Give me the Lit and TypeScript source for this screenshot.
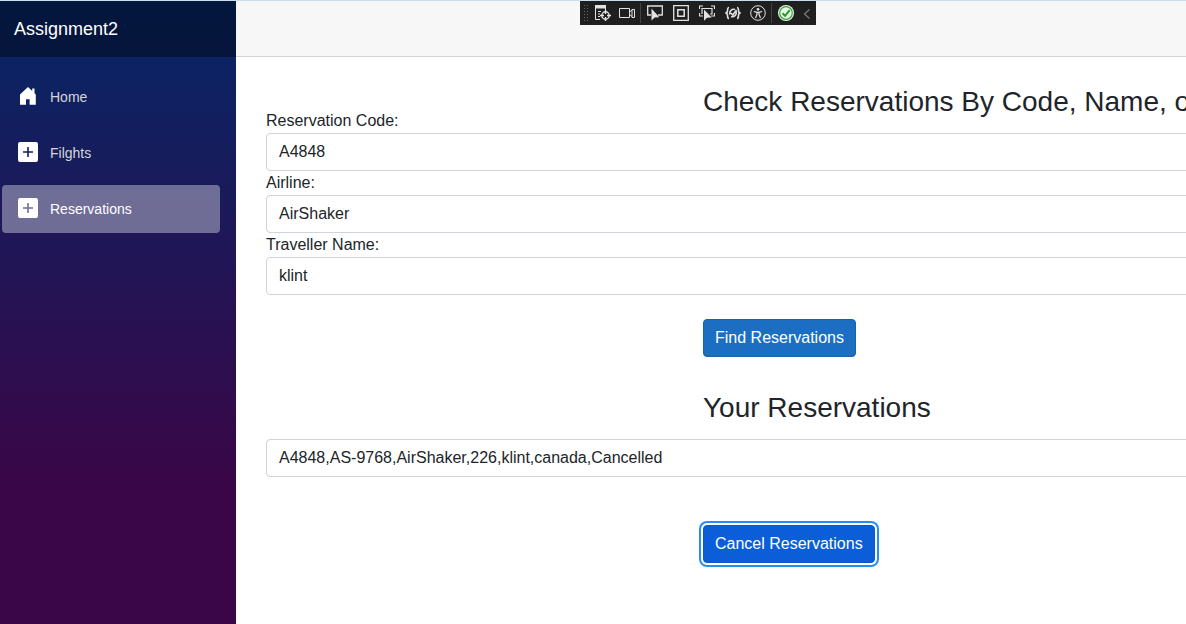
import { LitElement, html, css, svg } from "lit";
import { customElement, property } from "lit/decorators.js";

const houseIcon = svg`<svg class="icon" viewBox="0 0 20 20" aria-hidden="true"><path fill="#fff" d="M9.700 1.200 2 8.500v10.300h6v-5.500h3.600v5.500h6.200V8.500l-1.300-1.300V2.500h-2.300v2.600L10.300 1.200z"/></svg>`;
const plusIcon = svg`<svg class="icon" viewBox="0 0 20 20" aria-hidden="true"><path fill="#fff" fill-rule="evenodd" d="M2 0h16a2 2 0 0 1 2 2v16a2 2 0 0 1-2 2H2a2 2 0 0 1-2-2V2a2 2 0 0 1 2-2zm7.200 5v4.200H5v1.600h4.200V15h1.600v-4.200H15V9.200h-4.200V5z"/></svg>`;

const glyphs = {
  tree: svg`<path fill="#e2e2e2" stroke="none" d="M0 0h11v3.500H0z"/><path d="M.5 3v11.500H5M10.500 3v2M3 6.500h3M3 9h2M3 11.500h2"/><circle cx="10.500" cy="10.500" r="3.700" stroke-width="1.400"/><path stroke-width="1.400" d="M10.500 5v4M10.500 12v4M5 10.500h4M12 10.500h4"/>`,
  camera: svg`<path d="M.5 3.500h10v9H.5zM10.500 7 13 5M10.500 9.500l2.500 2M13 4.500h2.500v8H13z"/>`,
  select: svg`<path stroke-width="1.300" d="M4 10H.700V1h14.600v9H11"/><path fill="#e2e2e2" stroke="none" d="M4.500 3.500v12l3.200-3 4.600-.3z"/>`,
  layout: svg`<path stroke-width="1.300" d="M.7.700h14.600v14.600H.7z"/><path stroke-width="1.500" d="M4.800 4.800h6.400v6.400H4.800z"/>`,
  track: svg`<path stroke-width="1.200" d="M.5 4V1H4M12 1h3.500v3M15.500 8v3H12M.5 8v3H4M3 9V3.500h10V9h-2"/><path fill="#e2e2e2" stroke="none" d="M5 4.500v11.300l3-3 4.600-.3z"/>`,
  reload: svg`<path stroke-width="1.600" d="M4 2.500C2 2.500 2.700 6 2.300 7L1 8l1.300 1c.4 1-.3 4.500 1.700 4.500M12 2.500c2 0 1.300 3.500 1.700 4.500L15 8l-1.300 1c-.4 1 .3 4.500-1.700 4.500M5 9.500c-1-3.500 2-6 5-5M11 6.500c1 3.500-2 6-5 5M5.800 8l2 2 3.700-5"/>`,
  person: svg`<circle cx="8" cy="8" r="7.300"/><circle cx="8" cy="4.300" r="1" fill="#e2e2e2"/><path stroke-width="1.200" d="M3.800 6.500 7 7.300v2L5.500 13M12.200 6.500 9 7.300v2l1.500 3.700M7 7.300h2"/>`,
  check: svg`<circle cx="8" cy="8" r="8" fill="#e9f5e6" stroke="none"/><circle cx="8" cy="8" r="6.300" stroke="#38a337" stroke-width="1.200"/><path stroke="#249b24" stroke-width="2" d="m4.500 8.200 2.600 2.600 4.600-5.600"/>`,
  chevron: svg`<path stroke="#777" stroke-width="1.300" d="m10.500 4.500-5 4.500 5 4.500"/>`,
};

@customElement("debug-toolbar")
export class DebugToolbar extends LitElement {
  static styles = css`
    :host { display: flex; align-items: center; height: 24px; padding: 0 1px 0 3px; background: #1f1f1f; box-sizing: border-box; }
    .grip { width: 6px; height: 18px; margin-right: 2px; background: radial-gradient(circle, #666 1px, transparent 1px) 0 0 / 3px 3px; }
    .tool { display: grid; place-items: center; width: 26px; height: 24px; padding: 0; border: 0; background: none; }
    .compact { width: 24px; }
    .narrow { width: 16px; }
    .divider { width: 1px; height: 20px; margin: 0 1px; background: #444; }
    svg { display: block; width: 16px; height: 16px; fill: none; stroke: #e2e2e2; }
  `;
  private tool(name: keyof typeof glyphs, label: string, size = "") {
    return html`<button type="button" class="tool ${size}" aria-label=${label}><svg viewBox="0 0 16 16">${glyphs[name]}</svg></button>`;
  }
  render() {
    return html`
      <span class="grip"></span>
      ${this.tool("tree", "Go to Live Visual Tree", "compact")}
      ${this.tool("camera", "Record", "compact")}
      <span class="divider"></span>
      ${this.tool("select", "Select Element")}
      ${this.tool("layout", "Display Layout Adorners")}
      ${this.tool("track", "Track Focused Element")}
      ${this.tool("reload", "Hot Reload Settings")}
      ${this.tool("person", "Scan for Accessibility Issues", "compact")}
      <span class="divider"></span>
      ${this.tool("check", "Hot Reload")}
      ${this.tool("chevron", "Collapse", "narrow")}
    `;
  }
}

@customElement("side-nav")
export class SideNav extends LitElement {
  @property() active = "Reservations";
  static styles = css`
    :host { display: block; background: linear-gradient(180deg, rgb(5, 39, 103) 0%, #3a0647 78%); }
    .brand { display: flex; align-items: center; height: 56px; padding-left: 14px; background: rgba(0, 0, 0, 0.4); box-sizing: border-box; }
    .brand a { color: #fff; font-size: 18px; text-decoration: none; }
    nav { display: flex; flex-direction: column; gap: 8px; padding: 16px 16px 0 2px; }
    .item { display: flex; align-items: center; gap: 12px; height: 48px; padding: 0 16px; border-radius: 4px; color: #d7d7d7; font-size: 14px; text-decoration: none; box-sizing: border-box; }
    .active { background: rgba(255, 255, 255, 0.37); color: #fff; }
    .icon { width: 20px; height: 20px; margin-bottom: 2px; }
  `;
  render() {
    const items = [["Home", houseIcon], ["Filghts", plusIcon], ["Reservations", plusIcon]] as const;
    return html`
      <div class="brand"><a href="#">Assignment2</a></div>
      <nav>
        ${items.map(([text, icon]) => html`<a href="#" class="item ${text === this.active ? "active" : ""}">${icon}<span>${text}</span></a>`)}
      </nav>
    `;
  }
}

@customElement("app-root")
export class AppRoot extends LitElement {
  static styles = css`
    :host { display: grid; grid-template-columns: 236px minmax(0, 1fr); position: relative; min-height: 100vh; border-top: 1px solid #c9dfee; box-sizing: border-box; overflow: hidden; font: 16px/24px "Liberation Sans", Arial, sans-serif; color: #212529; background: #fff; }
    .page { overflow: hidden; }
    .top-row { height: 56px; background: #f7f7f7; border-bottom: 1px solid #d6d5d5; box-sizing: border-box; }
    debug-toolbar { position: absolute; top: 0; left: 580px; }
    .content { width: 100%; padding: 28px 0 0 30px; box-sizing: content-box; }
    h3 { margin: 0 0 0 46%; font-size: 28px; line-height: 34px; font-weight: 400; white-space: nowrap; }
    .title { margin-bottom: -10px; }
    .results { margin-top: 34px; margin-bottom: 14px; }
    label { display: block; }
    input { display: block; width: 100%; height: 38px; padding: 0 12px; border: 1px solid #ced4da; border-radius: 4px; box-sizing: border-box; font: inherit; color: inherit; background: #fff; }
    .btn { display: block; height: 38px; margin-left: 46%; padding: 0 11px; border: 1px solid #1861ac; border-radius: 4px; background: #1b6ec2; color: #fff; font: inherit; }
    .find { margin-top: 24px; }
    .cancel { margin-top: 48px; background: #0b5ed7; border-color: #0a58ca; box-shadow: 0 0 0 2px #fff, 0 0 0 4px #258cfb; }
  `;
  render() {
    return html`
      <side-nav></side-nav>
      <main class="page">
        <div class="top-row"></div>
        <article class="content">
          <h3 class="title">Check Reservations By Code, Name, or Airline</h3>
          <label for="code">Reservation Code:</label>
          <input id="code" type="text" value="A4848" />
          <label for="airline">Airline:</label>
          <input id="airline" type="text" value="AirShaker" />
          <label for="name">Traveller Name:</label>
          <input id="name" type="text" value="klint" />
          <button type="button" class="btn find">Find Reservations</button>
          <h3 class="results" id="results">Your Reservations</h3>
          <input type="text" readonly aria-labelledby="results" value="A4848,AS-9768,AirShaker,226,klint,canada,Cancelled" />
          <button type="button" class="btn cancel">Cancel Reservations</button>
        </article>
      </main>
      <debug-toolbar></debug-toolbar>
    `;
  }
}
